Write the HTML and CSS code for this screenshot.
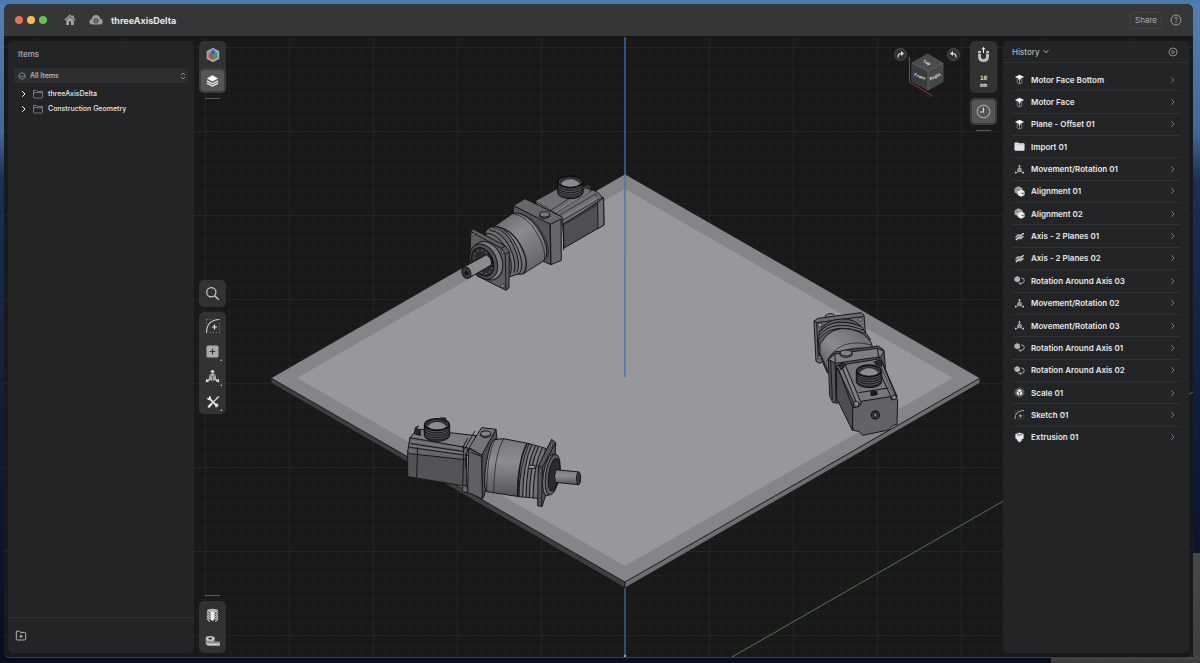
FILE: index.html
```html
<!DOCTYPE html>
<html lang="en">
<head>
<meta charset="utf-8">
<title>threeAxisDelta</title>
<meta name="viewport" content="width=device-width, initial-scale=1">
<link rel="stylesheet" href="styles.css">
</head>
<body>
<svg class="symbols" aria-hidden="true">
  <symbol id="chev" viewBox="0 0 8 8"><path d="M2.5 1.500l2.500 2.500-2.500 2.500" fill="none" stroke="currentColor" stroke-linecap="round" stroke-linejoin="round"/></symbol>
  <symbol id="folder" viewBox="0 0 12 10"><path d="M1.5 8V1.5h3l1 1h5V8q0 1-1 1h-7q-1 0-1-1zM1.5 3.7h9" fill="none" stroke="currentColor" stroke-width=".8"/></symbol>
  <symbol id="plane" viewBox="0 0 12 12"><path d="M6 .8l5 2.4-5 2.5-5-2.5z" fill="#f2f2f2"/><path d="M3.4 5v4.5L6 11l2.6-1.500V5M6 5.500V11" fill="none" stroke="#999" stroke-width=".8"/><path d="M4.500 5L6 8l1.500-3z" fill="#ddd"/></symbol>
  <symbol id="import" viewBox="0 0 12 12"><path d="M.5 2.500q0-1 1-1h3l1 1h5q1 0 1 1v6q0 1-1 1h-9q-1 0-1-1z" fill="#e4e4e4"/><path d="M.500 4h11" stroke="#b9b9b9" stroke-width=".6"/></symbol>
  <symbol id="move" viewBox="0 0 12 12"><path d="M6 1.500v4M5 8l-3 1.500M7 8l3 1.500" stroke="#bbb" stroke-width=".9"/><path d="M6 .8l1.400 2H4.600zM1 10.300l.4-2.500 1.700 2.200zM11 10.300l-.4-2.500-1.700 2.200z" fill="#ddd"/><path d="M6 3.900l2.400 1.300v2.700L6 9.300 3.600 7.900V5.200z" fill="#aaa"/><path d="M3.600 5.200L6 6.500l2.400-1.300M6 6.500v2.800" stroke="#444" stroke-width=".4" fill="none"/></symbol>
  <symbol id="align" viewBox="0 0 12 12"><path d="M5 .3l4.300 2.200v4.500L5 9.300.7 7V2.500z" fill="#a9a9a9"/><path d="M.7 2.500L5 4.800l4.300-2.300M5 4.800v4.500" stroke="#555" stroke-width=".5" fill="none"/><path d="M7.800 3.700l3.700 2v4l-3.700 2-3.700-2v-4z" fill="#eee"/><path d="M8 8.200l2.300-1.400v2.500z" fill="#444"/></symbol>
  <symbol id="axis" viewBox="0 0 12 12"><path d="M.7 7l3-3.500h4l-3 3.500zM4.500 9l3-3.500h3.800l-3 3.500z" fill="#aaa"/><path d="M2 9.800l8.500-7.300" stroke="#f2f2f2" stroke-width="1.300"/><path d="M3.500 6.300l5-1" stroke="#333" stroke-width=".6"/></symbol>
  <symbol id="rotate" viewBox="0 0 12 12"><path d="M3.500 1.200l3 1.700v3.300l-3 1.700-3-1.700V2.900z" fill="#b8b8b8"/><path d="M.5 2.900l3 1.700 3-1.700" stroke="#777" stroke-width=".4" fill="none"/><path d="M7.800 3.200q3.400 0 3.400 2.800t-3.200 3.200M5.500 7.800v1.700H8M7.300 8v2.400" stroke="#bbb" fill="none" stroke-width=".9"/></symbol>
  <symbol id="scale" viewBox="0 0 12 12"><path d="M6 .7l4.700 2.700v5.200L6 11.300 1.300 8.600V3.400z" fill="#333" stroke="#999" stroke-width=".8" stroke-dasharray="1.500 .6"/><path d="M6 2.300l3.200 1.900v3.700L6 9.700 2.800 7.900V4.200z" fill="#e8e8e8"/><path d="M2.800 4.200L6 6l3.200-1.800M6 6v3.700" stroke="#333" stroke-width=".7" fill="none"/></symbol>
  <symbol id="sketch" viewBox="0 0 12 12"><path d="M1 11q0-9 10-9.500" stroke="#ccc" fill="none" stroke-width=".9"/><path d="M7 5.700v3.600M5.200 7.500h3.600" stroke="#ddd" stroke-width=".8"/><path d="M1 2h4M1 2v4M10.500 5v6M4 11h5" stroke="#777" stroke-width=".7" stroke-dasharray=".8 1.200"/></symbol>
  <symbol id="extrude" viewBox="0 0 12 12"><path d="M1.500 2.200L6 .5l4.500 1.700v5L6 9.500 1.500 7.200z" fill="#e6e6e6"/><path d="M4.500 5h3v3.500h1.600L6 11.500 2.900 8.500h1.600z" fill="#eee"/><circle cx="4.300" cy="2.700" r="1" fill="#777"/><circle cx="7.700" cy="2.700" r="1" fill="#777"/><path d="M6 2.500v3" stroke="#888" stroke-width=".6"/></symbol>
</svg>

<div class="window">
  <header class="titlebar">
    <div class="lights"><i class="light red"></i><i class="light yellow"></i><i class="light green"></i></div>
    <button class="plain" aria-label="Home"><svg width="12" height="12" viewBox="0 0 12 12"><path d="M.8 6L6 1.300 11.200 6" fill="none" stroke="#a2a2a3" stroke-width="1.300"/><path d="M8.500 1.500H10V4L8.500 3zM2.200 6.200L6 3l3.800 3.200V11H7V7.500H5V11H2.200z" fill="#a2a2a3"/></svg></button>
    <button class="plain cloud" aria-label="Cloud sync"><svg width="14" height="12" viewBox="0 0 14 12"><path d="M3.500 10.500Q.4 10.400.4 7.700q0-2.200 2.300-2.700Q3.300 1 7 1q3.500 0 4.200 3.500 2.500.5 2.500 3 0 2.900-3 3z" fill="#9c9c9d"/><circle cx="7" cy="6.800" r="2.200" fill="none" stroke="#3a3b3c"/><path d="M5 6.800h4" stroke="#3a3b3c" stroke-width=".8"/></svg></button>
    <h1 class="doc-title">threeAxisDelta</h1>
    <button class="share">Share</button>
    <button class="plain" aria-label="Help"><svg width="12" height="12" viewBox="0 0 12 12"><circle cx="6" cy="6" r="5" fill="none" stroke="#a5a5a6" stroke-width=".9"/><path d="M4.500 4.800q0-1.500 1.500-1.500t1.500 1.300q0 .7-.8 1.100T6 6.900" fill="none" stroke="#a5a5a6" stroke-width=".9"/><circle cx="6" cy="8.500" r=".6" fill="#a5a5a6"/></svg></button>
  </header>

  <main class="workspace">
    <svg class="scene" viewBox="4 37 1189 620" preserveAspectRatio="xMidYMid slice" role="img" aria-label="Plate with three motors">
      <defs>
        <pattern id="minor" x="625" y="551" width="12" height="12" patternUnits="userSpaceOnUse"><path d="M.5 0v12M0 .5h12" stroke="#1e1e1e" fill="none"/></pattern>
        <pattern id="major" x="625" y="551" width="84" height="84" patternUnits="userSpaceOnUse"><path d="M.5 0v84M0 .5h84" stroke="#252525" fill="none"/></pattern>
        <linearGradient id="cyl1" x1="0" y1="0" x2=".6" y2="1"><stop offset="0" stop-color="#606064"/><stop offset=".45" stop-color="#8a8a8f"/><stop offset="1" stop-color="#66666a"/></linearGradient>
        <linearGradient id="cyl2" x1="0" y1="0" x2="0" y2="1"><stop offset="0" stop-color="#77777c"/><stop offset=".4" stop-color="#8c8c91"/><stop offset="1" stop-color="#545458"/></linearGradient>
        <linearGradient id="cyl3" x1="0" y1="1" x2="1" y2="0"><stop offset="0" stop-color="#4a4a4e"/><stop offset=".45" stop-color="#8a8a8f"/><stop offset="1" stop-color="#66666a"/></linearGradient>
        <g id="coil">
          <path d="M-38 0v32a38 18 0 0 0 76 0V0z" fill="#505054" stroke="#101011" stroke-width="3"/>
          <path d="M-38 7a38 18 0 0 0 76 0M-38 14a38 18 0 0 0 76 0M-38 21a38 18 0 0 0 76 0M-38 28a38 18 0 0 0 76 0" fill="none" stroke="#151516" stroke-width="3"/>
          <ellipse rx="37" ry="18" fill="#48484b" stroke="#0d0d0e" stroke-width="4"/>
          <path d="M-30 0a30 15 0 0 1 60 0M-30 5a30 15 0 0 1 60 0" fill="none" stroke="#161617" stroke-width="2"/>
          <path d="M-29 6q12-14 29-14t29 14q-12 9-29 9t-29-9z" fill="#8b8b90" stroke="none"/>
          <path d="M-32 6q12 10 32 10t32-10" fill="none" stroke="#161617" stroke-width="3"/>
        </g>
      </defs>
      <rect x="4" y="37" width="1189" height="620" fill="#191919"/>
      <rect x="4" y="37" width="1189" height="620" fill="url(#minor)"/>
      <rect x="4" y="37" width="1189" height="620" fill="url(#major)"/>
      <path d="M732 657L1193 392" stroke="#4a7c47"/>
      <path d="M271 378L625 582v6L271 383z" fill="#3e3e41" stroke="#151516" stroke-width=".8"/>
      <path d="M980 378L625 582v6l355-205z" fill="#6d6d72" stroke="#151516" stroke-width=".8"/>
      <path d="M625 174l355 204-355 204-354-204z" fill="#858489" stroke="#1c1c1e" stroke-width=".8"/>
      <path d="M625 189l328 189-328 188-328-188z" fill="#98979c"/>
      <path d="M625 174v203" stroke="#4a78b4" stroke-width="2" opacity=".75"/>
      <path d="M625 37v137" stroke="#2c62ad" stroke-width="2" opacity=".8"/>
      <path d="M625 588v68" stroke="#27608c" stroke-width="2" opacity=".8"/><circle cx="625" cy="656" r="1.300" fill="#8da2b5"/>

      <g transform="translate(450 165) scale(.3333)" stroke="#161617" stroke-width="3" stroke-linejoin="round">
        <path d="M255 108l65-36 75-12 48 22 17 18-120 80-70-40z" fill="#6f6f74"/>
        <path d="M338 178l122-75 2 77-120 69z" fill="#505054"/>
        <path d="M443 112l18-14 1 82-18 11z" fill="#6e6e72"/>
        <path d="M300 138l112-72M310 148l118-73M325 152l112-65 8 18M338 166l118-68M345 178l98-58M258 110l65 38" fill="none" stroke-width="2"/>
        <path d="M315 142l102-62" stroke="#909095"/><path d="M332 161l112-64" stroke="#8b8b90"/>
        <path d="M398 65l15-8 12 7-5 12" fill="#333"/>
        <use href="#coil" x="361" y="51"/>
        <path d="M190 122l35-21 110 54 5 12-38 15z" fill="#66666b"/>
        <path d="M190 122l110 55 3 122-25-11-88-124z" fill="#555559"/>
        <path d="M301 178l32-16 1 124-31 13z" fill="#66666b"/>
        <path d="M333 170l8 5v80" fill="none"/>
        <ellipse cx="284" cy="148" rx="15" ry="8" fill="#77777b"/>
        <path d="M269 148v7q12 11 30 0v-7" fill="none"/>
        <path d="M125 190L187 146q25-10 61 25 40 46 43 90 0 20-12 28l-60 38q-10 3-25-2z" fill="url(#cyl1)"/>
        <path d="M205 144q43 10 72 60t13 76" fill="none" stroke-width="2"/>
        <path d="M187 146q43 5 73 57t23 84" fill="none" stroke-width="2"/>
        <path d="M135 184q48 5 77 58t9 84" fill="none" stroke-width="4"/>
        <path d="M105 202q13-20 33-17 42 10 65 65t5 76l-38 12z" fill="#66666b"/>
        <path d="M108 204q34 0 59 45t14 78M118 195q38 5 61 51t12 77M129 187q39 6 62 56t10 79" fill="none"/>
        <path d="M113 200q37 3 61 49t13 76M134 187q40 7 62 58t8 78" fill="none" stroke="#86868b" stroke-width="2"/>
        <path d="M62 200l8-8 96 51 12 18-1 108-9 7-88-44-20-55z" fill="#5e5e62"/>
        <path d="M62 200l92 50 12 18 2 108M154 250l12-7M166 268l12-7" fill="none"/>
        <ellipse cx="112" cy="287" rx="43" ry="60" transform="rotate(-24 112 287)" fill="#7b7b80"/>
        <ellipse cx="101" cy="290" rx="39" ry="55" transform="rotate(-24 101 290)" fill="#505054"/>
        <ellipse cx="98" cy="291" rx="31" ry="45" transform="rotate(-24 98 291)" fill="#2b2b2d"/>
        <ellipse cx="99" cy="291" rx="25" ry="37" transform="rotate(-24 99 291)" fill="none" stroke="#66666a" stroke-width="3" stroke-dasharray="7 6"/>
        <path d="M112 268q16 8 14 31l-70 40-16-32z" fill="#8a8a8f"/>
        <path d="M112 270q18 10 12 36" fill="none" stroke-width="5"/>
        <ellipse cx="49" cy="323" rx="13" ry="18" transform="rotate(-24 49 323)" fill="#38383b"/>
        <circle cx="49" cy="324" r="5" fill="#161617"/>
        <g fill="#98989c" stroke-width="2"><circle cx="70" cy="209" r="4"/><circle cx="158" cy="261" r="4"/><circle cx="158" cy="363" r="5"/></g>
      </g>

      <g transform="translate(395 405) scale(.3333)" stroke="#161617" stroke-width="3" stroke-linejoin="round">
        <path d="M45 98l22-26 176 20-24 60-178-14z" fill="#7b7b80"/>
        <path d="M38 140l177 17v90l-18-6-159-26z" fill="#545458"/>
        <path d="M45 98l-7 42 5 6 168 18 8-35-24-5z" fill="#66666b"/>
        <path d="M47 116l160 24M43 127l165 23M68 125l-3 94M206 126l-3 120M240 78l-32 55M245 92l12-10M218 100l-16 30" fill="none"/>
        <path d="M50 108l154 24M46 122l160 23" stroke="#8e8e93" fill="none" stroke-width="2"/>
        <path d="M58 88l3-20 10-5M61 88l15 3V76L62 74" fill="#29292b"/>
        <use href="#coil" x="126" y="59"/>
        <path d="M134 39h18v6h-14" fill="#333"/>
        <path d="M222 128l38-60 43 5-42 78z" fill="#74747a"/>
        <path d="M221 130l39 20 3 132-45-20z" fill="#606064"/>
        <path d="M261 150l42-77 3 30-38 168-6 10z" fill="#4e4e52"/>
        <path d="M212 145v45M228 142l30 12M203 241v18l14 5v-20z" fill="#6e6e72"/>
        <ellipse cx="272" cy="86" rx="15" ry="8" fill="#818186"/>
        <path d="M257 86v6q14 12 30 0v-6" fill="none"/>
        <path d="M297 104l28-3 78 15-12 80-18 79-98-15q-12-15-2-80t24-76z" fill="url(#cyl2)"/>
        <path d="M300 102q-25 50-25 157M325 102q-28 50-29 160" fill="none" stroke-width="2"/>
        <path d="M396 116q-28 55-28 158" fill="none" stroke-width="5"/>
        <path d="M402 116l50 14-23 150-57-5q0-90 30-159z" fill="#6e6e73"/>
        <path d="M411 119q-27 55-28 157M421 122q-27 55-28 155M431 124q-27 55-28 154M442 127q-27 55-28 153" fill="none"/>
        <path d="M416 121q-27 55-28 155M437 126q-27 55-28 152" stroke="#929297" fill="none" stroke-width="2"/>
        <path d="M402 181h18v9h-18" fill="#a1a1a5"/>
        <path d="M430 183l40-80 12 10-1 40-20 90-20 62-13-3z" fill="#55555a"/>
        <path d="M430 183l12 4 40-74M442 187l-2 116" fill="none"/>
        <ellipse cx="465" cy="210" rx="20" ry="63" transform="rotate(9 465 210)" fill="#7e7e83"/>
        <ellipse cx="473" cy="209" rx="21" ry="61" transform="rotate(9 473 209)" fill="#5c5c60"/>
        <ellipse cx="477" cy="209" rx="16" ry="49" transform="rotate(9 477 209)" fill="#2b2b2d"/>
        <path d="M483 194l69 7-2 38-69-7q-5-20 2-38z" fill="url(#cyl2)"/>
        <ellipse cx="551" cy="220" rx="6" ry="19" fill="#38383b"/>
        <g fill="#98989c" stroke-width="2"><ellipse cx="470" cy="122" rx="3" ry="5"/><ellipse cx="436" cy="198" rx="3" ry="5"/><ellipse cx="435" cy="286" rx="3" ry="5"/></g>
      </g>

      <g transform="translate(800 300) scale(.3333)" stroke="#161617" stroke-width="3" stroke-linejoin="round">
        <path d="M76 55v-8q16-12 28-1v8" fill="#808085"/>
        <path d="M42 63l12-8 130-17 8 8 4 50-136 94-12-6z" fill="#6b6b70"/>
        <path d="M42 63l8 5 136-18 6-4M50 68l5 110" fill="none"/>
        <path d="M58 95q18-36 64-38 42-3 65 27l25 35-130 100-28-65z" fill="#5b5b60"/>
        <path d="M58 97q42-50 125-18M57 107q42-53 133-17M57 116q44-52 139-17" fill="none"/>
        <path d="M59 101q42-50 127-15M58 112q42-52 135-16" stroke="#87878c" fill="none" stroke-width="2"/>
        <path d="M60 132q34-58 94-44 43 10 61 42l4 35-125 73-34-80z" fill="url(#cyl3)"/>
        <path d="M80 185q38-75 135-50M84 196q36-68 134-48" fill="none" stroke-width="2"/>
        <path d="M85 178l18-22 132-18 17 13 5 61-145 98-14-3-9-20z" fill="#555559"/>
        <path d="M85 178l20-16 127-17 20 9-9 16-137 20z" fill="#7e7e83"/>
        <path d="M105 162l3 145M92 180l5 120M232 146l8 45" fill="none"/>
        <ellipse cx="138" cy="159" rx="18" ry="9" fill="#818186"/>
        <path d="M120 159v7q17 13 36 0v-7" fill="none"/>
        <path d="M107 198l135-22 50 115-130 24z" fill="#77777c"/>
        <path d="M110 200l50 105-2 88-10-20-38-78z" fill="#4e4e52"/>
        <path d="M115 205l42 115M125 198l45 112M136 195l46 110M225 185l50 110M235 180l50 113M243 180l48 115M176 278l90-14" fill="none"/>
        <path d="M131 200l44 106M240 187l43 100" stroke="#98989d" fill="none" stroke-width="2"/>
        <path d="M115 196l14-8 8 7-13 15zM222 187l15-7 12 7-7 14z" fill="#2b2b2d"/>
        <use href="#coil" x="207" y="213"/>
        <path d="M213 276l4-4v6h4v-8l5 6 5-2v10l-18 3z" fill="#19191a"/>
        <path d="M158 322l12 1 13-9v-10l88-14 4 10 14-4 4 3-2 74-14 4-12 13-77 16-10-11-17-4-3-10z" fill="#626267"/>
        <circle cx="226" cy="345" r="12" fill="#444448" stroke-width="4"/><circle cx="226" cy="345" r="6" fill="#737378"/>
        <g fill="#88888d"><circle cx="169" cy="312" r="8"/><circle cx="282" cy="292" r="7"/></g>
        <g fill="#a0a0a4" stroke-width="2"><circle cx="60" cy="75" r="6"/><circle cx="181" cy="59" r="5"/><circle cx="58" cy="172" r="4"/></g>
      </g>
    </svg>

    <aside class="panel items">
      <h2 class="panel-title" id="items-title">Items</h2>
      <div class="filter">
        <svg width="8" height="8" viewBox="0 0 8 8"><path d="M4 .6l3 1.700v3.400L4 7.400 1 5.700V2.300zM1.200 3.500L4 5l2.800-1.500" fill="none" stroke="#a0a0a1" stroke-width=".7"/></svg>
        <select class="filter-select" aria-labelledby="items-title"><option>All Items</option></select>
        <svg width="6" height="8" viewBox="0 0 6 8"><path d="M1 3l2-2 2 2M1 5l2 2 2-2" fill="none" stroke="#a0a0a1" stroke-width=".8"/></svg>
      </div>
      <ul class="tree">
        <li><button class="tree-row"><svg class="tree-chev" width="8" height="8"><use href="#chev"/></svg><svg width="12" height="10"><use href="#folder"/></svg>threeAxisDelta</button></li>
        <li><button class="tree-row"><svg class="tree-chev" width="8" height="8"><use href="#chev"/></svg><svg width="12" height="10"><use href="#folder"/></svg>Construction Geometry</button></li>
      </ul>
      <footer class="items-footer"><button class="plain" aria-label="New folder"><svg width="12" height="12" viewBox="0 0 12 12"><path d="M1.300 8.700V2q0-.8.8-.8h2.300l1 1.200h4q1.300 0 1.300 1.300v5q0 1.300-1.300 1.300H2.600q-1.300 0-1.300-1.300zM6 4.600v3.400M4.300 6.300h3.400" fill="none" stroke="#c6c6c7" stroke-width=".9"/></svg></button></footer>
    </aside>

    <nav class="tools" aria-label="Tools">
      <div class="stack">
        <div class="group">
          <button class="tool" aria-label="Appearance"><svg width="16" height="16" viewBox="0 0 16 16"><path d="M8 .7l6.300 3.600v7.400L8 15.300l-6.300-3.600V4.300z" fill="#a9abac"/><path d="M8 3l4.500 2.500v5L8 13l-4.500-2.500v-5z" fill="#8592a0"/><path d="M8 1.800l2.300 3L8 8 5.700 4.800z" fill="#2372d8"/><path d="M8 8v5l-4.300-2.300V6z" fill="#cc4a3e"/><path d="M8 8v5l4.300-2.300V6z" fill="#3a9e5a"/><path d="M5.300 5.500L8 4l2.700 1.500L8 8z" fill="#2a63c8"/></svg></button>
          <button class="tool active" aria-label="Items"><svg width="13" height="14" viewBox="0 0 15 15"><path d="M7.500 1L14 4.500 7.500 8 1 4.500z" fill="#fff"/><path d="M1 7.400l6.500 3.400L14 7.400M1 10l6.500 3.400L14 10" fill="none" stroke="#eee" stroke-width="1.500"/></svg></button>
        </div>
        <i class="handle"></i>
      </div>
      <div class="stack">
        <div class="group"><button class="tool" aria-label="Search"><svg width="15" height="15" viewBox="0 0 15 15"><circle cx="6.300" cy="6.300" r="4.600" fill="none" stroke="#ccc" stroke-width="1.200"/><path d="M9.700 9.700l4 4" stroke="#ccc" stroke-width="1.300"/></svg></button></div>
        <div class="group">
          <button class="tool" aria-label="Sketch"><svg width="16" height="16" viewBox="0 0 16 16"><path d="M1.500 15Q1.500 2 14.500 1.500" fill="none" stroke="#ccc" stroke-width="1.100"/><path d="M9.500 6.500v5M7 9h5" stroke="#eee" stroke-width="1.100"/><path d="M1.500 1.500h6M1.500 1.500v6M14.500 5v10M5 14.500h9" stroke="#888" stroke-dasharray="1 2"/></svg></button>
          <button class="tool more" aria-label="Add"><svg width="13" height="13" viewBox="0 0 14 14"><rect x=".5" y=".5" width="13" height="13" rx="2" fill="#aaa"/><path d="M7 4v6M4 7h6" stroke="#333" stroke-width="1.200"/></svg></button>
          <button class="tool more" aria-label="Transform"><svg width="15" height="15" viewBox="0 0 12 12"><path d="M6 1.500v3M4.500 8l-2.500 1.200M7.500 8l2.500 1.200" stroke="#ccc" stroke-width="1.200"/><path d="M6 .3l2 2.200H4zM.5 10.600l.6-3.100 2.100 2.600zM11.500 10.600l-.6-3.100-2.100 2.600z" fill="#ddd"/><path d="M6 3.300l2.800 1.500v3.300L6 9.700 3.200 8.100V4.800z" fill="#aaa"/><path d="M3.200 4.800L6 6.300l2.800-1.500M6 6.300v3.400" stroke="#444" stroke-width=".5" fill="none"/></svg></button>
          <button class="tool more" aria-label="Modify"><svg width="14" height="14" viewBox="0 0 15 15"><path d="M3 3l9.500 9.500" stroke="#e6e6e6" stroke-width="2"/><path d="M12 3.500L5.500 9.500" stroke="#ddd" stroke-width="1.300"/><path d="M5.800 8L2.200 11.500q-1 1.500 0 2t2 0L7.300 9.500z" fill="#ddd"/><path d="M1.200 3.500q0 2 2.300 2t2-2.300-2.300-2v2H1.200zM13.500 11q0-1.800-2-1.800t-2 2 2 2.200v-1.900z" fill="#e6e6e6"/><path d="M11 3l2.500-2 .8.800L12.500 4z" fill="#ddd"/></svg></button>
        </div>
      </div>
      <div class="stack">
        <i class="handle"></i>
        <div class="group">
          <button class="tool" aria-label="Section view"><svg width="13" height="14" viewBox="0 0 14 15"><path d="M1 3q0-2 6-2t6 2v10q0 1.500-2 1.500H3Q1 14.500 1 13z" fill="#3a3a3a"/><ellipse cx="7" cy="2.800" rx="5.800" ry="1.900" fill="#b5b5b5"/><path d="M1 4l3 3M1 6.500l3 3M1 9l3 3M1 11.500l3 3M13 4l-3 3M13 6.500l-3 3M13 9l-3 3M13 11.500l-3 3" stroke="#ddd" stroke-width="1.100"/><path d="M4.700 4h4.600v8L7 14l-2.300-2z" fill="#eee"/></svg></button>
          <button class="tool" aria-label="Measure"><svg width="16" height="12" viewBox="0 0 16 12"><path d="M.8 3.500v5.200q1 2 5 2H15V6.500H9.500v-3z" fill="#aaa"/><ellipse cx="5.200" cy="3.500" rx="4.500" ry="2.400" fill="#c5c5c5"/><ellipse cx="5.200" cy="3.500" rx="1.900" ry="1" fill="#333"/><path d="M.8 6Q2 7 6 7h9" stroke="#444" stroke-width=".6" fill="none"/><path d="M3 9v1.500M5 9v1.500M7 9v1.500M9 9v1.500M11 9v1.500M13 9v1.500" stroke="#fff" stroke-width=".8"/></svg></button>
        </div>
      </div>
    </nav>

    <div class="view-nav">
      <button class="turn" aria-label="Rotate view right"><svg width="9" height="9" viewBox="0 0 9 9"><path d="M2 7.500Q1.700 3.500 5.500 3.500" stroke="#ddd" fill="none" stroke-width="1.200"/><path d="M5 1l3 2.500L5 6z" fill="#ddd"/></svg></button>
      <svg class="cube" width="40" height="52" viewBox="0 0 40 52">
        <path d="M2.500 10v24" stroke="#2f5da0"/><path d="M2.500 34L23 46.500" stroke="#a33232"/><text x="22" y="49" class="axis-x">x</text><text x="1" y="12" class="axis-z">z</text>
        <path d="M20.500 6L36 15v18.500L21 42 5 33V15z" fill="#454648" stroke="#55565a" stroke-width=".8"/>
        <path d="M20.500 6L36 15l-15 8.500L5 15z" fill="#4b4c4e"/><path d="M5 15l16 8.500V42L5 33z" fill="#3a3b3d"/><path d="M5 15l16 8.500L36 15M21 23.500V42" fill="none" stroke="#5f6063"/>
        <text class="face" transform="translate(13 28) rotate(22)" x="0" y="2">Front</text><text class="face" transform="translate(28 28) rotate(-24)" x="0" y="2">Right</text><text class="face" transform="translate(20 14) rotate(28)" x="0" y="2">Top</text>
      </svg>
      <button class="turn" aria-label="Rotate view left"><svg width="9" height="9" viewBox="0 0 9 9"><path d="M7 7.500Q7.300 3.500 3.500 3.500" stroke="#ddd" fill="none" stroke-width="1.200"/><path d="M4 1L1 3.500 4 6z" fill="#ddd"/></svg></button>
    </div>

    <div class="tools right-tools">
      <div class="stack">
        <div class="group">
          <button class="tool" aria-label="Snapping"><svg width="15" height="17" viewBox="0 0 15 17"><path d="M3.500 5V10.500q0 4 4 4t4-4V5" fill="none" stroke="#bbb" stroke-width="3"/><path d="M2 7.500h3M10 7.500h3" stroke="#444" stroke-width=".8"/><path d="M7.500 1.500V7M6 3.500l1.500-2 1.500 2" stroke="#fff" fill="none"/></svg></button>
          <button class="tool unit" aria-label="Grid step 10 mm"><span>10</span><span>mm</span></button>
        </div>
        <div class="group"><button class="tool active" aria-label="History"><svg width="15" height="15" viewBox="0 0 15 15"><circle cx="7.500" cy="7.500" r="6.300" fill="none" stroke="#bbb"/><path d="M7.500 3.500v4.500H4" fill="none" stroke="#ddd" stroke-width="1.100"/></svg></button></div>
        <i class="handle"></i>
      </div>
    </div>

    <aside class="panel history">
      <header class="history-head">
        <button class="plain history-title">History <svg width="6" height="5" viewBox="0 0 6 5"><path d="M.700 1.200L3 3.700l2.300-2.500" fill="none" stroke="#b5b5b6"/></svg></button>
        <button class="plain" aria-label="Filter history"><svg width="10" height="10" viewBox="0 0 10 10"><circle cx="5" cy="5" r="4" fill="none" stroke="#98989a" stroke-width=".9"/><path d="M2.800 4h4.400M3.300 5.300h3.400M4.100 6.600h1.800" stroke="#98989a" stroke-width=".7"/></svg></button>
      </header>
      <ol class="steps">
        <li><button class="step"><svg class="step-icon"><use href="#plane"/></svg><span>Motor Face Bottom</span><svg class="step-chev"><use href="#chev"/></svg></button></li>
        <li><button class="step"><svg class="step-icon"><use href="#plane"/></svg><span>Motor Face</span><svg class="step-chev"><use href="#chev"/></svg></button></li>
        <li><button class="step"><svg class="step-icon"><use href="#plane"/></svg><span>Plane - Offset 01</span><svg class="step-chev"><use href="#chev"/></svg></button></li>
        <li><button class="step"><svg class="step-icon"><use href="#import"/></svg><span>Import 01</span></button></li>
        <li><button class="step"><svg class="step-icon"><use href="#move"/></svg><span>Movement/Rotation 01</span><svg class="step-chev"><use href="#chev"/></svg></button></li>
        <li><button class="step"><svg class="step-icon"><use href="#align"/></svg><span>Alignment 01</span><svg class="step-chev"><use href="#chev"/></svg></button></li>
        <li><button class="step"><svg class="step-icon"><use href="#align"/></svg><span>Alignment 02</span><svg class="step-chev"><use href="#chev"/></svg></button></li>
        <li><button class="step"><svg class="step-icon"><use href="#axis"/></svg><span>Axis - 2 Planes 01</span><svg class="step-chev"><use href="#chev"/></svg></button></li>
        <li><button class="step"><svg class="step-icon"><use href="#axis"/></svg><span>Axis - 2 Planes 02</span><svg class="step-chev"><use href="#chev"/></svg></button></li>
        <li><button class="step"><svg class="step-icon"><use href="#rotate"/></svg><span>Rotation Around Axis 03</span><svg class="step-chev"><use href="#chev"/></svg></button></li>
        <li><button class="step"><svg class="step-icon"><use href="#move"/></svg><span>Movement/Rotation 02</span><svg class="step-chev"><use href="#chev"/></svg></button></li>
        <li><button class="step"><svg class="step-icon"><use href="#move"/></svg><span>Movement/Rotation 03</span><svg class="step-chev"><use href="#chev"/></svg></button></li>
        <li><button class="step"><svg class="step-icon"><use href="#rotate"/></svg><span>Rotation Around Axis 01</span><svg class="step-chev"><use href="#chev"/></svg></button></li>
        <li><button class="step"><svg class="step-icon"><use href="#rotate"/></svg><span>Rotation Around Axis 02</span><svg class="step-chev"><use href="#chev"/></svg></button></li>
        <li><button class="step"><svg class="step-icon"><use href="#scale"/></svg><span>Scale 01</span><svg class="step-chev"><use href="#chev"/></svg></button></li>
        <li><button class="step"><svg class="step-icon"><use href="#sketch"/></svg><span>Sketch 01</span><svg class="step-chev"><use href="#chev"/></svg></button></li>
        <li><button class="step"><svg class="step-icon"><use href="#extrude"/></svg><span>Extrusion 01</span><svg class="step-chev"><use href="#chev"/></svg></button></li>
      </ol>
    </aside>
  </main>
</div>
</body>
</html>
```
FILE: styles.css
```css
* { box-sizing: border-box; }
body {
  margin: 0;
  min-height: 100vh;
  padding: 4px 7px 6px 4px;
  display: flex;
  font-family: Inter, "Liberation Sans", sans-serif;
  font-size: 8px;
  color: #e8e8e9;
  background:
    linear-gradient(#45484c, #3c3a39) right bottom / 149px 6px no-repeat,
    linear-gradient(#47484b, #413e3c) right bottom / 7px 110px no-repeat,
    linear-gradient(#4c78ad, #4c78ad) top / 100% 4px no-repeat,
    linear-gradient(#5580b4 0, #426798 20%, #1b3054 27%, #101f3d 60%, #070e1f 100%);
}
button, select { font: inherit; color: inherit; background: none; border: 0; padding: 0; margin: 0; }
button { cursor: pointer; }
svg { display: block; flex: none; }
ul, ol { list-style: none; margin: 0; padding: 0; }
h1, h2 { margin: 0; }
.symbols { position: absolute; width: 0; height: 0; }

.window {
  flex: 1;
  display: flex;
  flex-direction: column;
  border-radius: 6px;
  overflow: hidden;
  background: #1a1a1a;
  box-shadow: 0 1px 0 #3b3d40;
}
.titlebar {
  height: 33px;
  display: flex;
  align-items: center;
  padding: 0 11px 0 11px;
  background: #353638;
  border-bottom: 1px solid #141414;
}
.lights { display: flex; gap: 4px; margin-right: 17px; }
.light { width: 8px; height: 8px; border-radius: 50%; }
.red { background: #ed6a5e; }
.yellow { background: #f4bf4f; }
.green { background: #61c554; }
.plain { display: flex; align-items: center; }
.cloud { margin: 0 8px 0 13px; }
.doc-title { font-size: 9px; font-weight: 700; flex: 1; }
.share {
  height: 17px;
  padding: 0 4px;
  margin-right: 8px;
  border: 1px solid #404143;
  border-radius: 3px;
  color: #adadae;
}

.workspace {
  flex: 1;
  position: relative;
  display: flex;
  padding: 4px;
}
.scene { position: absolute; inset: 0; width: 100%; height: 100%; }
.panel, .tools, .view-nav { position: relative; }
.panel {
  width: 186px;
  display: flex;
  flex-direction: column;
  border-radius: 5px;
  background: #232426;
}
.panel-title { font-size: 8px; font-weight: 500; color: #b0b0b1; padding: 8px 10px 9px; line-height: 10px; }
.filter {
  display: flex;
  align-items: center;
  gap: 4px;
  height: 15px;
  margin: 0 6px 3px 6px;
  padding: 0 2px 0 4px;
  border-radius: 2px;
  background: #2d2e30;
  color: #c0c0c1;
}
.filter-select { flex: 1; appearance: none; font-size: 7px; font-weight: 500; }
.tree-row {
  display: flex;
  align-items: center;
  height: 15px;
  padding-left: 12px;
  font-size: 7px;
  font-weight: 500;
}
.tree-row svg { margin-right: 4px; color: #8d8d8e; }
.tree-row .tree-chev { margin-right: 4px; color: #fff; }
.items-footer {
  margin-top: auto;
  height: 36px;
  display: flex;
  align-items: center;
  padding-left: 7px;
  border-top: 1px solid #303133;
}

.tools { width: 27px; margin-left: 5px; display: flex; flex-direction: column; justify-content: space-between; }
.stack { display: flex; flex-direction: column; align-items: center; gap: 5px; }
.group { width: 100%; border-radius: 5px; background: #323233; display: flex; flex-direction: column; }
.tool {
  position: relative;
  height: 27px;
  display: flex;
  align-items: center;
  justify-content: center;
  border-radius: 5px;
}
.tool + .tool { height: 25px; }
.tool.active { background: #555556; border: 2px solid #3c3c3d; }
.more::after {
  content: "";
  position: absolute;
  right: 4px;
  bottom: 3px;
  border: 1px solid #bbb;
  border-top-color: transparent;
  border-left-color: transparent;
}
.handle { width: 15px; height: 1px; background: #5a5a5a; }
.unit { flex-direction: column; font: 700 6px/7px "DejaVu Sans Mono", monospace; color: #ddd; }

.view-nav { margin-left: auto; display: flex; align-items: flex-start; padding-top: 7px; }
.turn {
  width: 13px;
  height: 13px;
  border-radius: 50%;
  border: 1px solid #4c4c4d;
  background: #323233;
  display: flex;
  align-items: center;
  justify-content: center;
}
.face { font: 700 4px "DejaVu Sans Mono", monospace; fill: #e5e5e5; text-anchor: middle; }
.axis-x { font: 5px Inter, sans-serif; fill: #b33; }
.axis-z { font: 5px Inter, sans-serif; fill: #35a; }
.right-tools { margin: 0 6px 0 10px; }

.history-head {
  height: 22px;
  display: flex;
  align-items: center;
  justify-content: space-between;
  padding: 0 11px 0 9px;
  border-bottom: 1px solid #303133;
}
.history-title { gap: 3px; font-weight: 500; color: #b5b5b6; }
.steps {
  min-height: 380px;
  margin: 6px 9px 0;
  display: grid;
  grid-auto-rows: 1fr;
}
.steps li { display: flex; border-bottom: 1px solid #303133; }
.steps li:last-child { border-bottom-color: transparent; }
.step { flex: 1; display: flex; align-items: center; gap: 6px; padding: 0 3px 0 2px; font-weight: 600; text-align: left; }
.step span { flex: 1; }
.step-icon { width: 11px; height: 11px; }
.step-chev { width: 8px; height: 8px; color: #77787a; }
```
